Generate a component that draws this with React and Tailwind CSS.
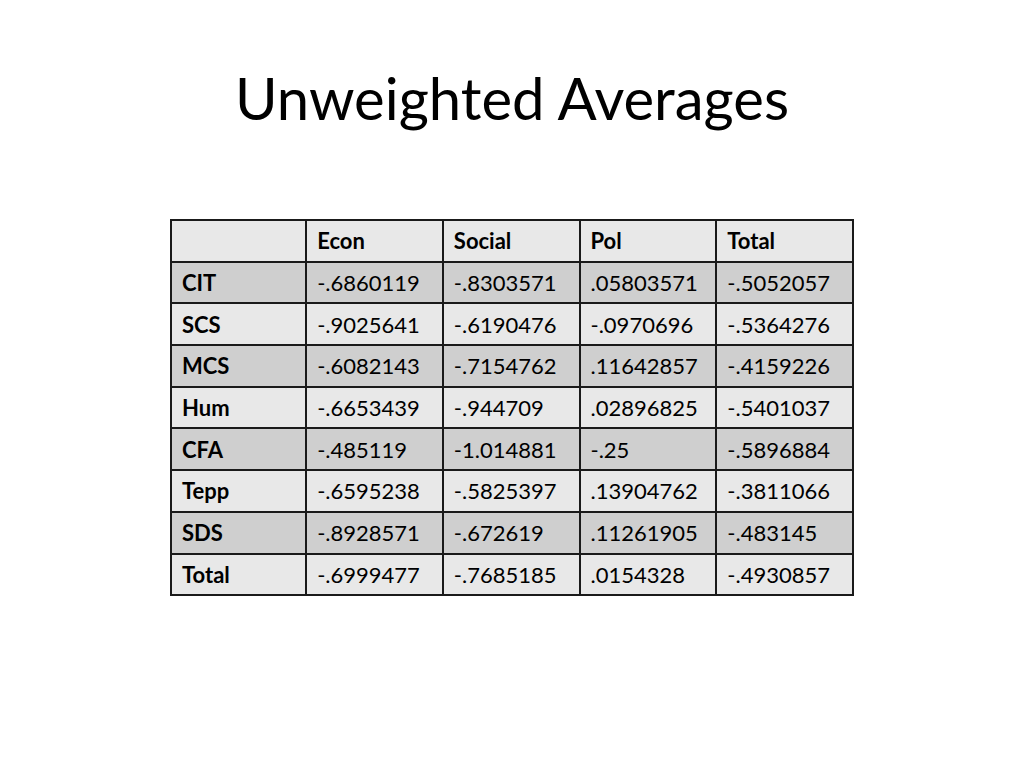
import React from "react";

const rows = [
  ["CIT", "-.6860119", "-.8303571", ".05803571", "-.5052057"],
  ["SCS", "-.9025641", "-.6190476", "-.0970696", "-.5364276"],
  ["MCS", "-.6082143", "-.7154762", ".11642857", "-.4159226"],
  ["Hum", "-.6653439", "-.944709", ".02896825", "-.5401037"],
  ["CFA", "-.485119", "-1.014881", "-.25", "-.5896884"],
  ["Tepp", "-.6595238", "-.5825397", ".13904762", "-.3811066"],
  ["SDS", "-.8928571", "-.672619", ".11261905", "-.483145"],
  ["Total", "-.6999477", "-.7685185", ".0154328", "-.4930857"],
];

export default function App() {
  return (
    <div className="w-[1024px] h-[768px] bg-white flex flex-col items-center" style={{ fontFamily: "Lato, 'Open Sans', sans-serif" }}>
      <h1 className="mt-[63px] text-[58px] leading-[70px] text-black">Unweighted Averages</h1>
      <table className="mt-[86px] w-[684px] border-collapse text-[22px] text-black">
        <tbody>
          <tr className="bg-[#e8e8e8] h-[41.7px]">
            <td className="border-2 border-[#1a1a1a] w-[137px] px-[10px]"></td>
            {["Econ", "Social", "Pol", "Total"].map((h) => (
              <td key={h} className="border-2 border-[#1a1a1a] w-[137px] px-[10px] font-bold">{h}</td>
            ))}
          </tr>
          {rows.map((r, i) => (
            <tr key={r[0]} className={`h-[41.7px] ${i % 2 === 0 ? "bg-[#cfcfcf]" : "bg-[#e8e8e8]"}`}>
              {r.map((c, j) => (
                <td key={j} className={`border-2 border-[#1a1a1a] px-[10px] ${j === 0 ? "font-bold" : ""}`}>{c}</td>
              ))}
            </tr>
          ))}
        </tbody>
      </table>
    </div>
  );
}
